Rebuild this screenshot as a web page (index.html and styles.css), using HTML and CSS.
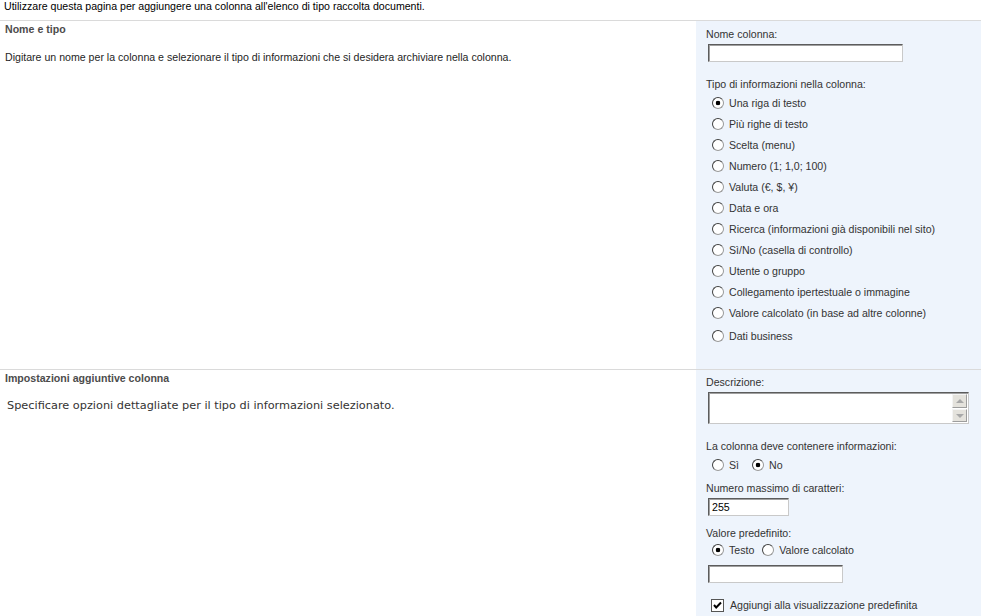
FILE: index.html
```html
<!DOCTYPE html>
<html lang="it">
<head>
    <meta charset="utf-8">
    <title>Crea colonna</title>
    <link rel="stylesheet" href="styles.css">
</head>
<body>
<p class="intro">Utilizzare questa pagina per aggiungere una colonna all'elenco di tipo raccolta documenti.</p>

<div class="section first">
    <div class="info">
        <h3>Nome e tipo</h3>
        <p class="desc">Digitare un nome per la colonna e selezionare il tipo di informazioni che si desidera archiviare nella colonna.</p>
    </div>
    <div class="controls">
        <div class="label">Nome colonna:</div>
        <div class="textbox name-box"></div>
        <div class="label gap">Tipo di informazioni nella colonna:</div>
        <ul class="options">
            <li><span class="radio checked"></span>Una riga di testo</li>
            <li><span class="radio"></span>Più righe di testo</li>
            <li><span class="radio"></span>Scelta (menu)</li>
            <li><span class="radio"></span>Numero (1; 1,0; 100)</li>
            <li><span class="radio"></span>Valuta (€, $, ¥)</li>
            <li><span class="radio"></span>Data e ora</li>
            <li><span class="radio"></span>Ricerca (informazioni già disponibili nel sito)</li>
            <li><span class="radio"></span>Sì/No (casella di controllo)</li>
            <li><span class="radio"></span>Utente o gruppo</li>
            <li><span class="radio"></span>Collegamento ipertestuale o immagine</li>
            <li><span class="radio"></span>Valore calcolato (in base ad altre colonne)</li>
            <li class="last"><span class="radio"></span>Dati business</li>
        </ul>
    </div>
</div>

<div class="section second">
    <div class="info">
        <h3>Impostazioni aggiuntive colonna</h3>
        <p class="desc verdana">Specificare opzioni dettagliate per il tipo di informazioni selezionato.</p>
    </div>
    <div class="controls">
        <div class="label">Descrizione:</div>
        <div class="textarea">
            <div class="scroll">
                <span class="arrow up"></span>
                <span class="arrow down"></span>
            </div>
        </div>
        <div class="label gap">La colonna deve contenere informazioni:</div>
        <div class="inline-radios">
            <span class="radio"></span><span class="opt wide">Sì</span>
            <span class="radio checked"></span><span class="opt">No</span>
        </div>
        <div class="label gap-tiny">Numero massimo di caratteri:</div>
        <div class="textbox max-box">255</div>
        <div class="label gap-small">Valore predefinito:</div>
        <div class="inline-radios tight">
            <span class="radio checked"></span><span class="opt">Testo</span>
            <span class="radio"></span><span class="opt">Valore calcolato</span>
        </div>
        <div class="textbox default-box"></div>
        <div class="check-row">
            <svg class="checkbox" width="13" height="13" viewBox="0 0 13 13">
                <rect x="0.5" y="0.5" width="12" height="12" fill="#fff" stroke="#555"/>
                <path d="M3 6 L5.2 8.5 L10 3.5" fill="none" stroke="#000" stroke-width="2"/>
            </svg>
            Aggiungi alla visualizzazione predefinita
        </div>
    </div>
</div>
</body>
</html>
```

FILE: styles.css
```css
body {
    margin: 0;
    font-family: "Liberation Sans", Arial, sans-serif;
    font-size: 10.6px;
    color: #000;
    background: #fff;
}
.intro {
    margin: 0;
    padding: 0 0 0 4px;
    height: 13px;
    line-height: 13px;
}
.section {
    display: flex;
    border-top: 1px solid #dadada;
}
.first {
    margin-top: 7px;
}
.info {
    flex: 1;
    padding: 1px 0 0 5px;
}
.info h3 {
    margin: 0;
    font-size: 10.6px;
    font-weight: bold;
    line-height: 14px;
    color: #4c4c4c;
}
.desc {
    margin: 14px 0 0 0;
    line-height: 14px;
    color: #1e1e1e;
}
.verdana {
    font-family: "DejaVu Sans", Verdana, sans-serif;
    font-size: 11.3px;
    padding-left: 2px;
    color: #333;
}
.controls {
    width: 275px;
    padding: 6px 0 23px 10px;
    background: #eef4fc;
    color: #333;
}
.second .controls {
    padding-top: 5px;
}
.label {
    line-height: 14px;
}
.label.gap {
    margin-top: 15px;
}
.label.gap-small {
    margin-top: 10px;
}
.label.gap-tiny {
    margin-top: 6px;
}
.textbox {
    box-sizing: border-box;
    height: 18px;
    margin: 3px 0 0 2px;
    background: #fff;
    border: 1px solid #c9c9c9;
    border-top-color: #5c5c5c;
    border-left-color: #5c5c5c;
    box-shadow: inset 1px 1px 0 #a0a0a0;
    padding: 1px 3px;
    line-height: 14px;
    color: #000;
}
.name-box {
    width: 195px;
}
.max-box {
    width: 81px;
}
.default-box {
    width: 135px;
    margin-top: 5px;
}
.options {
    list-style: none;
    margin: 1px 0 0 0;
    padding: 0 0 0 6px;
}
.options li {
    display: flex;
    align-items: center;
    height: 21px;
}
.options li.last {
    margin-top: 2px;
}
.radio {
    display: inline-block;
    box-sizing: border-box;
    width: 12px;
    height: 12px;
    margin-right: 5px;
    border-radius: 50%;
    border: 1px solid #9a9a9a;
    border-top-color: #404040;
    border-left-color: #404040;
    background: #fff;
    flex: none;
}
.radio.checked {
    background: radial-gradient(circle, #000 0, #000 2px, #fff 2.6px);
}
.textarea {
    position: relative;
    box-sizing: border-box;
    width: 261px;
    height: 32px;
    margin: 3px 0 0 2px;
    background: #fff;
    border: 1px solid #c9c9c9;
    border-top-color: #5c5c5c;
    border-left-color: #5c5c5c;
    box-shadow: inset 1px 1px 0 #a0a0a0;
}
.scroll {
    position: absolute;
    right: 1px;
    top: 1px;
    bottom: 1px;
    width: 15px;
    display: flex;
    flex-direction: column;
    gap: 1px;
}
.arrow {
    flex: 1;
    background: #e4e2dc;
    border: 1px solid #f4f4f4;
    border-right-color: #9d9d9d;
    border-bottom-color: #9d9d9d;
    position: relative;
}
.arrow::after {
    content: "";
    position: absolute;
    left: 3px;
    top: 4px;
    border-left: 4px solid transparent;
    border-right: 4px solid transparent;
}
.arrow.up::after {
    border-bottom: 4px solid #a8a8a8;
}
.arrow.down::after {
    border-top: 4px solid #a8a8a8;
}
.inline-radios {
    display: flex;
    align-items: center;
    height: 20px;
    margin: 2px 0 2px 6px;
}
.inline-radios.tight {
    margin-top: 0;
}
.inline-radios .opt {
    margin-right: 8px;
}
.inline-radios .opt.wide {
    margin-right: 13px;
}
.check-row {
    display: flex;
    align-items: center;
    height: 14px;
    margin: 15px 0 0 5px;
}
.checkbox {
    margin-right: 6px;
}
```
